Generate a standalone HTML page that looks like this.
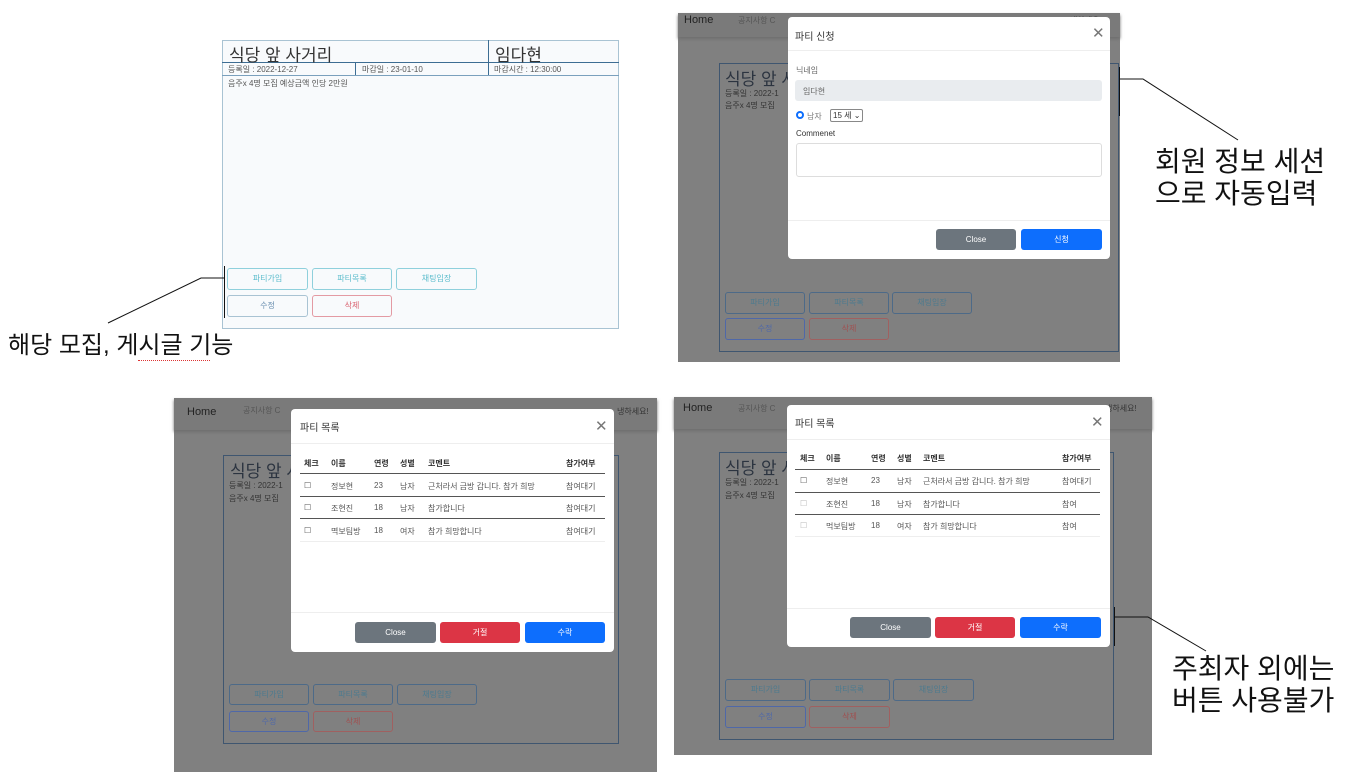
<!DOCTYPE html>
<html><head><meta charset="utf-8"><style>
*{margin:0;padding:0;box-sizing:border-box}
body{width:1345px;height:777px;background:#fff;position:relative;overflow:hidden;font-family:"Liberation Sans","Noto Sans CJK KR",sans-serif;color:#333}
.a{position:absolute}
.card{position:absolute;border:1px solid #a9c3d3;background:#f8fafc}
.hl{position:absolute;height:1px;background:#3d6d93}
.vl{position:absolute;width:1px;background:#3d6d93}
.btn{position:absolute;border:1px solid #8fd0dc;border-radius:3px;font-size:8px;text-align:center;color:#5bbccc}
.gb{position:absolute;border:1px solid #4d6a88;border-radius:3px;font-size:8px;text-align:center;line-height:20px;color:#4d7a8e}
.gray{position:absolute;background:#808080}
.modal{position:absolute;background:#fff;border-radius:4px}
.fb{position:absolute;border-radius:3px;color:#fff;font-size:8px;text-align:center}
.t{position:absolute;font-size:8px;white-space:nowrap;color:#555}
.th{font-weight:bold;color:#333}
.big{position:absolute;font-size:28px;color:#111;line-height:32px;white-space:nowrap}
.nav{position:absolute;background:#7a7a7a;box-shadow:0 2px 3px #6e6e6e}
.ic{position:absolute;border:1px solid #3f5670}
svg{position:absolute;left:0;top:0}
</style></head><body>

<!-- Panel 1 -->
<div class="card" style="left:222px;top:40px;width:397px;height:289px"></div>
<div class="hl" style="left:222px;top:62px;width:397px"></div>
<div class="hl" style="left:222px;top:75px;width:397px;background:#7aa0bd"></div>
<div class="vl" style="left:488px;top:40px;height:35px"></div>
<div class="vl" style="left:355px;top:62px;height:13px"></div>
<div class="a" style="left:229px;top:41px;font-size:17px;color:#333">식당 앞 사거리</div>
<div class="a" style="left:495px;top:41px;font-size:17px;color:#333">임다현</div>
<div class="t" style="left:228px;top:64px">등록일 : 2022-12-27</div>
<div class="t" style="left:362px;top:64px">마감일 : 23-01-10</div>
<div class="t" style="left:494px;top:64px">마감시간 : 12:30:00</div>
<div class="t" style="left:228px;top:78px">음주x 4명 모집 예상금액 인당 2만원</div>
<div class="btn" style="left:227px;top:268px;width:81px;height:22px;line-height:20px">파티가입</div>
<div class="btn" style="left:312px;top:268px;width:80px;height:22px;line-height:20px">파티목록</div>
<div class="btn" style="left:396px;top:268px;width:81px;height:22px;line-height:20px">채팅입장</div>
<div class="btn" style="left:227px;top:295px;width:81px;height:22px;line-height:20px;border-color:#a9c3d3;color:#6a8fb0">수정</div>
<div class="btn" style="left:312px;top:295px;width:80px;height:22px;line-height:20px;border-color:#e39aa3;color:#d9606e">삭제</div>
<div class="big" style="left:8px;top:330px;font-size:24px">해당 모집, 게시글 기능</div>
<div class="a" style="left:138px;top:360px;width:72px;border-top:1px dotted #d33"></div>

<!-- Panel 2 -->
<div class="gray" style="left:678px;top:13px;width:442px;height:349px"></div>
<div class="nav" style="left:678px;top:13px;width:442px;height:24px"></div>
<div class="t" style="left:684px;top:14px;font-size:11px;color:#222">Home</div>
<div class="t" style="left:738px;top:15px;color:#555">공지사항 C</div>
<div class="t" style="left:1070px;top:15px;color:#333">냉하세요!</div>
<div class="ic" style="left:719px;top:63px;width:400px;height:289px"></div>
<div class="a" style="left:725px;top:65px;font-size:17px;color:#2c3440">식당 앞 사</div>
<div class="t" style="left:725px;top:88px;color:#333">등록일 : 2022-1</div>
<div class="t" style="left:725px;top:100px;color:#333">음주x 4명 모집</div>
<div class="gb" style="left:725px;top:292px;width:80px;height:22px">파티가입</div>
<div class="gb" style="left:809px;top:292px;width:80px;height:22px">파티목록</div>
<div class="gb" style="left:892px;top:292px;width:80px;height:22px">채팅입장</div>
<div class="gb" style="left:725px;top:318px;width:80px;height:22px;border-color:#4f68a8;color:#4f68a8">수정</div>
<div class="gb" style="left:809px;top:318px;width:80px;height:22px;border-color:#a06060;color:#a05050">삭제</div>
<div class="modal" style="left:788px;top:17px;width:322px;height:242px"></div>
<div class="a" style="left:795px;top:28px;font-size:10px;color:#333">파티 신청</div>
<div class="a" style="left:1092px;top:24px;font-size:15px;color:#777">✕</div>
<div class="a" style="left:788px;top:50px;width:322px;height:1px;background:#eee"></div>
<div class="t" style="left:796px;top:65px;color:#666">닉네임</div>
<div class="a" style="left:795px;top:80px;width:307px;height:21px;background:#e9ecef;border-radius:3px"></div>
<div class="t" style="left:803px;top:86px;color:#666">임다현</div>
<div class="a" style="left:796px;top:111px;width:8px;height:8px;border:2.5px solid #0d6efd;border-radius:50%"></div>
<div class="t" style="left:807px;top:111px;color:#777">남자</div>
<div class="a" style="left:830px;top:109px;width:33px;height:13px;border:1px solid #888;border-radius:2px;font-size:8px;padding-left:2px;line-height:11px;color:#333">15 세 ⌄</div>
<div class="t" style="left:796px;top:129px;color:#333">Commenet</div>
<div class="a" style="left:796px;top:143px;width:306px;height:34px;border:1px solid #ddd;border-radius:3px"></div>
<div class="a" style="left:788px;top:220px;width:322px;height:1px;background:#eee"></div>
<div class="fb" style="left:936px;top:229px;width:80px;height:21px;line-height:21px;background:#6c757d">Close</div>
<div class="fb" style="left:1021px;top:229px;width:81px;height:21px;line-height:21px;background:#0d6efd">신청</div>
<div class="big" style="left:1155px;top:146px">회원 정보 세션<br>으로 자동입력</div>

<!-- Panel 3 -->
<div class="gray" style="left:174px;top:398px;width:483px;height:374px"></div>
<div class="nav" style="left:174px;top:398px;width:483px;height:32px"></div>
<div class="t" style="left:187px;top:406px;font-size:11px;color:#222">Home</div>
<div class="t" style="left:243px;top:405px">공지사항 C</div>
<div class="t" style="left:617px;top:406px;color:#333">냉하세요!</div>
<div class="ic" style="left:223px;top:455px;width:396px;height:289px"></div>
<div class="a" style="left:230px;top:457px;font-size:17px;color:#2c3440">식당 앞 사</div>
<div class="t" style="left:229px;top:480px;color:#333">등록일 : 2022-1</div>
<div class="t" style="left:229px;top:493px;color:#333">음주x 4명 모집</div>
<div class="gb" style="left:229px;top:684px;width:80px;height:21px">파티가입</div>
<div class="gb" style="left:313px;top:684px;width:80px;height:21px">파티목록</div>
<div class="gb" style="left:397px;top:684px;width:80px;height:21px">채팅입장</div>
<div class="gb" style="left:229px;top:711px;width:80px;height:21px;border-color:#4f68a8;color:#4f68a8">수정</div>
<div class="gb" style="left:313px;top:711px;width:80px;height:21px;border-color:#a06060;color:#a05050">삭제</div>
<div class="modal" style="left:291px;top:409px;width:323px;height:243px"></div>
<div class="a" style="left:300px;top:419px;font-size:10px;color:#333">파티 목록</div>
<div class="a" style="left:595px;top:417px;font-size:15px;color:#777">✕</div>
<div class="a" style="left:291px;top:443px;width:323px;height:1px;background:#eee"></div>
<div class="t th" style="left:304px;top:458px">체크</div><div class="t th" style="left:331px;top:458px">이름</div><div class="t th" style="left:374px;top:458px">연령</div><div class="t th" style="left:400px;top:458px">성별</div><div class="t th" style="left:428px;top:458px">코멘트</div><div class="t th" style="left:566px;top:458px">참가여부</div>
<div class="a" style="left:300px;top:473px;width:305px;height:1px;background:#555"></div>
<div class="t" style="left:304px;top:481px">☐</div><div class="t" style="left:331px;top:481px">정보현</div><div class="t" style="left:374px;top:481px">23</div><div class="t" style="left:400px;top:481px">남자</div><div class="t" style="left:428px;top:481px">근처라서 금방 갑니다. 참가 희망</div><div class="t" style="left:566px;top:481px">참여대기</div>
<div class="a" style="left:300px;top:496px;width:305px;height:1px;background:#555"></div>
<div class="t" style="left:304px;top:503px">☐</div><div class="t" style="left:331px;top:503px">조현진</div><div class="t" style="left:374px;top:503px">18</div><div class="t" style="left:400px;top:503px">남자</div><div class="t" style="left:428px;top:503px">참가합니다</div><div class="t" style="left:566px;top:503px">참여대기</div>
<div class="a" style="left:300px;top:518px;width:305px;height:1px;background:#555"></div>
<div class="t" style="left:304px;top:526px">☐</div><div class="t" style="left:331px;top:526px">멱보팀방</div><div class="t" style="left:374px;top:526px">18</div><div class="t" style="left:400px;top:526px">여자</div><div class="t" style="left:428px;top:526px">참가 희망합니다</div><div class="t" style="left:566px;top:526px">참여대기</div>
<div class="a" style="left:300px;top:541px;width:305px;height:1px;background:#eee"></div>
<div class="a" style="left:291px;top:612px;width:323px;height:1px;background:#eee"></div>
<div class="fb" style="left:355px;top:622px;width:81px;height:21px;line-height:21px;background:#6c757d">Close</div>
<div class="fb" style="left:440px;top:622px;width:80px;height:21px;line-height:21px;background:#dc3545">거절</div>
<div class="fb" style="left:525px;top:622px;width:80px;height:21px;line-height:21px;background:#0d6efd">수락</div>

<!-- Panel 4 -->
<div class="gray" style="left:674px;top:397px;width:478px;height:358px"></div>
<div class="nav" style="left:674px;top:397px;width:478px;height:32px"></div>
<div class="t" style="left:683px;top:402px;font-size:11px;color:#222">Home</div>
<div class="t" style="left:738px;top:403px">공지사항 C</div>
<div class="t" style="left:1105px;top:403px;color:#333">냉하세요!</div>
<div class="ic" style="left:719px;top:452px;width:395px;height:288px"></div>
<div class="a" style="left:725px;top:454px;font-size:17px;color:#2c3440">식당 앞 사</div>
<div class="t" style="left:725px;top:477px;color:#333">등록일 : 2022-1</div>
<div class="t" style="left:725px;top:490px;color:#333">음주x 4명 모집</div>
<div class="gb" style="left:725px;top:679px;width:81px;height:22px">파티가입</div>
<div class="gb" style="left:809px;top:679px;width:81px;height:22px">파티목록</div>
<div class="gb" style="left:893px;top:679px;width:81px;height:22px">채팅입장</div>
<div class="gb" style="left:725px;top:706px;width:81px;height:22px;border-color:#4f68a8;color:#4f68a8">수정</div>
<div class="gb" style="left:809px;top:706px;width:81px;height:22px;border-color:#a06060;color:#a05050">삭제</div>
<div class="modal" style="left:787px;top:405px;width:323px;height:242px"></div>
<div class="a" style="left:795px;top:415px;font-size:10px;color:#333">파티 목록</div>
<div class="a" style="left:1091px;top:413px;font-size:15px;color:#777">✕</div>
<div class="a" style="left:787px;top:439px;width:323px;height:1px;background:#eee"></div>
<div class="t th" style="left:800px;top:453px">체크</div><div class="t th" style="left:826px;top:453px">이름</div><div class="t th" style="left:871px;top:453px">연령</div><div class="t th" style="left:897px;top:453px">성별</div><div class="t th" style="left:923px;top:453px">코멘트</div><div class="t th" style="left:1062px;top:453px">참가여부</div>
<div class="a" style="left:795px;top:469px;width:305px;height:1px;background:#555"></div>
<div class="t" style="left:800px;top:476px">☐</div><div class="t" style="left:826px;top:476px">정보현</div><div class="t" style="left:871px;top:476px">23</div><div class="t" style="left:897px;top:476px">남자</div><div class="t" style="left:923px;top:476px">근처라서 금방 갑니다. 참가 희망</div><div class="t" style="left:1062px;top:476px">참여대기</div>
<div class="a" style="left:795px;top:492px;width:305px;height:1px;background:#555"></div>
<div class="t" style="left:800px;top:499px;color:#bbb">☐</div><div class="t" style="left:826px;top:499px">조현진</div><div class="t" style="left:871px;top:499px">18</div><div class="t" style="left:897px;top:499px">남자</div><div class="t" style="left:923px;top:499px">참가합니다</div><div class="t" style="left:1062px;top:499px">참여</div>
<div class="a" style="left:795px;top:514px;width:305px;height:1px;background:#555"></div>
<div class="t" style="left:800px;top:521px;color:#bbb">☐</div><div class="t" style="left:826px;top:521px">먹보팀방</div><div class="t" style="left:871px;top:521px">18</div><div class="t" style="left:897px;top:521px">여자</div><div class="t" style="left:923px;top:521px">참가 희망합니다</div><div class="t" style="left:1062px;top:521px">참여</div>
<div class="a" style="left:795px;top:536px;width:305px;height:1px;background:#eee"></div>
<div class="a" style="left:787px;top:608px;width:323px;height:1px;background:#eee"></div>
<div class="fb" style="left:850px;top:617px;width:81px;height:21px;line-height:21px;background:#6c757d">Close</div>
<div class="fb" style="left:935px;top:617px;width:80px;height:21px;line-height:21px;background:#dc3545">거절</div>
<div class="fb" style="left:1020px;top:617px;width:81px;height:21px;line-height:21px;background:#0d6efd">수락</div>
<div class="big" style="left:1172px;top:653px">주최자 외에는<br>버튼 사용불가</div>

<svg width="1345" height="777">
<g stroke="#111" stroke-width="1" fill="none">
<path d="M224.5 266V318"/><path d="M224 278H201L108 323"/>
<path d="M1119.5 67V116"/><path d="M1120 79H1143L1238 140"/>
<path d="M1114.5 607V646"/><path d="M1114 617H1148L1206 651"/>
</g></svg>
</body></html>
